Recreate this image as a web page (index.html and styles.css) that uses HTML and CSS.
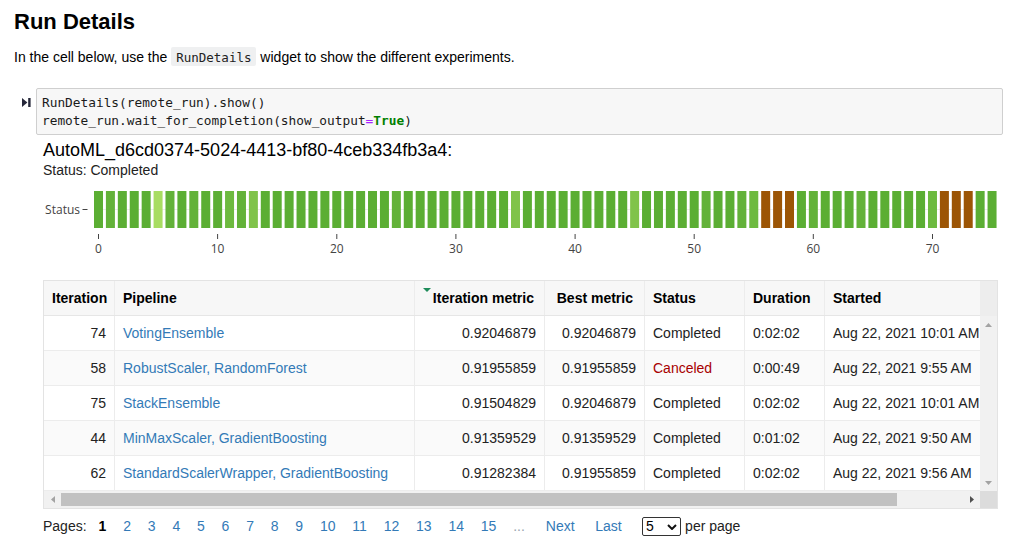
FILE: index.html
```html
<!DOCTYPE html>
<html lang="en">
<head>
<meta charset="utf-8">
<title>Run Details</title>
<link rel="stylesheet" href="styles.css">
</head>
<body>
<div class="md">
  <h2 class="title">Run Details</h2>
  <p class="intro">In the cell below, use the <code class="inline">RunDetails</code> widget to show the different experiments.</p>
</div>

<div class="cell">
  <div class="prompt">
    <svg class="run-icon" width="9" height="9" viewBox="0 0 9 9"><polygon points="0,0 5.4,4.5 0,9" fill="#26283a"/><rect x="6.2" y="0" width="2.4" height="9" fill="#26283a"/></svg>
  </div>
  <div class="input"><span>RunDetails(remote_run).show()</span>
<span>remote_run.wait_for_completion(show_output<span class="op">=</span><span class="kw">True</span>)</span></div>
</div>

<div class="output">
  <div class="run-title">AutoML_d6cd0374-5024-4413-bf80-4ceb334fb3a4:</div>
  <div class="run-status">Status: Completed</div>

  <svg class="chart" width="960" height="80" viewBox="43 180 960 80">
    <line x1="94" y1="209.5" x2="996" y2="209.5" stroke="#eeeeee" stroke-width="1"/>
    <text class="axis" x="80" y="213.6" text-anchor="end">Status</text>
    <line x1="82.5" y1="209.5" x2="87.5" y2="209.5" stroke="#444" stroke-width="1"/>
    <g class="bars">
      <rect class="a" x="94.00" y="191" width="9" height="37"/>
      <rect class="b" x="105.91" y="191" width="9" height="37"/>
      <rect class="a" x="117.83" y="191" width="9" height="37"/>
      <rect class="a" x="129.74" y="191" width="9" height="37"/>
      <rect class="a" x="141.66" y="191" width="9" height="37"/>
      <rect class="e" x="153.57" y="191" width="9" height="37"/>
      <rect class="b" x="165.48" y="191" width="9" height="37"/>
      <rect class="a" x="177.40" y="191" width="9" height="37"/>
      <rect class="b" x="189.31" y="191" width="9" height="37"/>
      <rect class="a" x="201.23" y="191" width="9" height="37"/>
      <rect class="a" x="213.14" y="191" width="9" height="37"/>
      <rect class="c" x="225.05" y="191" width="9" height="37"/>
      <rect class="b" x="236.97" y="191" width="9" height="37"/>
      <rect class="d" x="248.88" y="191" width="9" height="37"/>
      <rect class="a" x="260.80" y="191" width="9" height="37"/>
      <rect class="a" x="272.71" y="191" width="9" height="37"/>
      <rect class="a" x="284.62" y="191" width="9" height="37"/>
      <rect class="a" x="296.54" y="191" width="9" height="37"/>
      <rect class="a" x="308.45" y="191" width="9" height="37"/>
      <rect class="a" x="320.37" y="191" width="9" height="37"/>
      <rect class="a" x="332.28" y="191" width="9" height="37"/>
      <rect class="a" x="344.19" y="191" width="9" height="37"/>
      <rect class="a" x="356.11" y="191" width="9" height="37"/>
      <rect class="a" x="368.02" y="191" width="9" height="37"/>
      <rect class="a" x="379.94" y="191" width="9" height="37"/>
      <rect class="b" x="391.85" y="191" width="9" height="37"/>
      <rect class="a" x="403.76" y="191" width="9" height="37"/>
      <rect class="a" x="415.68" y="191" width="9" height="37"/>
      <rect class="a" x="427.59" y="191" width="9" height="37"/>
      <rect class="a" x="439.51" y="191" width="9" height="37"/>
      <rect class="a" x="451.42" y="191" width="9" height="37"/>
      <rect class="a" x="463.33" y="191" width="9" height="37"/>
      <rect class="a" x="475.25" y="191" width="9" height="37"/>
      <rect class="a" x="487.16" y="191" width="9" height="37"/>
      <rect class="a" x="499.08" y="191" width="9" height="37"/>
      <rect class="d" x="510.99" y="191" width="9" height="37"/>
      <rect class="a" x="522.90" y="191" width="9" height="37"/>
      <rect class="a" x="534.82" y="191" width="9" height="37"/>
      <rect class="a" x="546.73" y="191" width="9" height="37"/>
      <rect class="a" x="558.65" y="191" width="9" height="37"/>
      <rect class="a" x="570.56" y="191" width="9" height="37"/>
      <rect class="a" x="582.47" y="191" width="9" height="37"/>
      <rect class="a" x="594.39" y="191" width="9" height="37"/>
      <rect class="a" x="606.30" y="191" width="9" height="37"/>
      <rect class="a" x="618.22" y="191" width="9" height="37"/>
      <rect class="d" x="630.13" y="191" width="9" height="37"/>
      <rect class="a" x="642.04" y="191" width="9" height="37"/>
      <rect class="a" x="653.96" y="191" width="9" height="37"/>
      <rect class="a" x="665.87" y="191" width="9" height="37"/>
      <rect class="a" x="677.79" y="191" width="9" height="37"/>
      <rect class="a" x="689.70" y="191" width="9" height="37"/>
      <rect class="b" x="701.61" y="191" width="9" height="37"/>
      <rect class="a" x="713.53" y="191" width="9" height="37"/>
      <rect class="a" x="725.44" y="191" width="9" height="37"/>
      <rect class="b" x="737.36" y="191" width="9" height="37"/>
      <rect class="c" x="749.27" y="191" width="9" height="37"/>
      <rect class="r" x="761.18" y="191" width="9" height="37"/>
      <rect class="r" x="773.10" y="191" width="9" height="37"/>
      <rect class="r" x="785.01" y="191" width="9" height="37"/>
      <rect class="a" x="796.93" y="191" width="9" height="37"/>
      <rect class="b" x="808.84" y="191" width="9" height="37"/>
      <rect class="a" x="820.75" y="191" width="9" height="37"/>
      <rect class="a" x="832.67" y="191" width="9" height="37"/>
      <rect class="a" x="844.58" y="191" width="9" height="37"/>
      <rect class="b" x="856.50" y="191" width="9" height="37"/>
      <rect class="a" x="868.41" y="191" width="9" height="37"/>
      <rect class="a" x="880.32" y="191" width="9" height="37"/>
      <rect class="a" x="892.24" y="191" width="9" height="37"/>
      <rect class="a" x="904.15" y="191" width="9" height="37"/>
      <rect class="a" x="916.07" y="191" width="9" height="37"/>
      <rect class="c" x="927.98" y="191" width="9" height="37"/>
      <rect class="r" x="939.89" y="191" width="9" height="37"/>
      <rect class="r" x="951.81" y="191" width="9" height="37"/>
      <rect class="r" x="963.72" y="191" width="9" height="37"/>
      <rect class="a" x="975.64" y="191" width="9" height="37"/>
      <rect class="a" x="987.55" y="191" width="9" height="37"/>
    </g>
    <g class="ticks" stroke="#444" stroke-width="1">
      <line x1="98.5" y1="234" x2="98.5" y2="239"/>
      <line x1="217.6" y1="234" x2="217.6" y2="239"/>
      <line x1="336.8" y1="234" x2="336.8" y2="239"/>
      <line x1="455.9" y1="234" x2="455.9" y2="239"/>
      <line x1="575.1" y1="234" x2="575.1" y2="239"/>
      <line x1="694.2" y1="234" x2="694.2" y2="239"/>
      <line x1="813.3" y1="234" x2="813.3" y2="239"/>
      <line x1="932.5" y1="234" x2="932.5" y2="239"/>
    </g>
    <g class="axis" text-anchor="middle">
      <text x="98.5" y="253.4">0</text>
      <text x="217.6" y="253.4">10</text>
      <text x="336.8" y="253.4">20</text>
      <text x="455.9" y="253.4">30</text>
      <text x="575.1" y="253.4">40</text>
      <text x="694.2" y="253.4">50</text>
      <text x="813.3" y="253.4">60</text>
      <text x="932.5" y="253.4">70</text>
    </g>
  </svg>

  <div class="grid">
    <div class="grid-main">
      <div class="table">
        <div class="tr th">
          <div class="td">Iteration</div>
          <div class="td">Pipeline</div>
          <div class="td num sorted"><span class="sort-ind"></span>Iteration metric</div>
          <div class="td num hbest">Best metric</div>
          <div class="td">Status</div>
          <div class="td">Duration</div>
          <div class="td">Started</div>
        </div>
        <div class="tr">
          <div class="td num">74</div>
          <div class="td"><a class="link">VotingEnsemble</a></div>
          <div class="td num">0.92046879</div>
          <div class="td num">0.92046879</div>
          <div class="td">Completed</div>
          <div class="td">0:02:02</div>
          <div class="td">Aug 22, 2021 10:01 AM</div>
        </div>
        <div class="tr">
          <div class="td num">58</div>
          <div class="td"><a class="link">RobustScaler, RandomForest</a></div>
          <div class="td num">0.91955859</div>
          <div class="td num">0.91955859</div>
          <div class="td canceled">Canceled</div>
          <div class="td">0:00:49</div>
          <div class="td">Aug 22, 2021 9:55 AM</div>
        </div>
        <div class="tr">
          <div class="td num">75</div>
          <div class="td"><a class="link">StackEnsemble</a></div>
          <div class="td num">0.91504829</div>
          <div class="td num">0.92046879</div>
          <div class="td">Completed</div>
          <div class="td">0:02:02</div>
          <div class="td">Aug 22, 2021 10:01 AM</div>
        </div>
        <div class="tr">
          <div class="td num">44</div>
          <div class="td"><a class="link">MinMaxScaler, GradientBoosting</a></div>
          <div class="td num">0.91359529</div>
          <div class="td num">0.91359529</div>
          <div class="td">Completed</div>
          <div class="td">0:01:02</div>
          <div class="td">Aug 22, 2021 9:50 AM</div>
        </div>
        <div class="tr">
          <div class="td num">62</div>
          <div class="td"><a class="link">StandardScalerWrapper, GradientBoosting</a></div>
          <div class="td num">0.91282384</div>
          <div class="td num">0.91955859</div>
          <div class="td">Completed</div>
          <div class="td">0:02:02</div>
          <div class="td">Aug 22, 2021 9:56 AM</div>
        </div>
      </div>
      <div class="vscroll">
        <div class="vs-head"></div>
        <div class="vs-btn"><svg width="7" height="4" viewBox="0 0 7 4"><polygon points="0,4 3.5,0 7,4" fill="#a3a3a3"/></svg></div>
        <div class="vs-track"></div>
        <div class="vs-btn"><svg width="7" height="4" viewBox="0 0 7 4"><polygon points="0,0 7,0 3.5,4" fill="#a3a3a3"/></svg></div>
      </div>
    </div>
    <div class="hscroll-row">
      <div class="hscroll">
        <div class="hs-btn"><svg width="4" height="7" viewBox="0 0 4 7"><polygon points="4,0 4,7 0,3.5" fill="#a3a3a3"/></svg></div>
        <div class="hs-track"><div class="hs-thumb"></div></div>
        <div class="hs-btn"><svg width="4" height="7" viewBox="0 0 4 7"><polygon points="0,0 4,3.5 0,7" fill="#505050"/></svg></div>
      </div>
      <div class="corner"></div>
    </div>
  </div>

  <div class="pager">
    <span class="lbl">Pages:</span>
    <span class="pg cur">1</span>
    <a class="pg">2</a>
    <a class="pg">3</a>
    <a class="pg">4</a>
    <a class="pg">5</a>
    <a class="pg">6</a>
    <a class="pg">7</a>
    <a class="pg">8</a>
    <a class="pg">9</a>
    <a class="pg">10</a>
    <a class="pg">11</a>
    <a class="pg">12</a>
    <a class="pg">13</a>
    <a class="pg">14</a>
    <a class="pg">15</a>
    <span class="ell">...</span>
    <a class="nav">Next</a>
    <a class="nav">Last</a>
    <span class="sel-wrap">
      <select class="sel"><option>5</option></select>
      <svg class="chev" width="10" height="6" viewBox="0 0 10 6"><polyline points="1,1 5,5 9,1" fill="none" stroke="#111" stroke-width="2"/></svg>
    </span>
    <span class="per">per page</span>
  </div>
</div>
</body>
</html>
```

FILE: styles.css
```css
* { box-sizing: border-box; }

body {
  margin: 0;
  background: #ffffff;
  color: #000000;
  font-family: "Liberation Sans", Arial, sans-serif;
  font-size: 14px;
}

.md { padding-left: 14px; }

.title {
  margin: 9px 0 0;
  font-size: 22px;
  line-height: 26px;
  font-weight: bold;
}

.intro {
  margin: 12px 0 0;
  line-height: 20px;
}

.inline {
  font-family: "DejaVu Sans Mono", monospace;
  font-size: 12.5px;
  background: #eff0f1;
  padding: 3px 5px 1px;
  border-radius: 2px;
  color: #222;
}

.cell {
  display: flex;
  margin-top: 20px;
  padding-right: 13px;
}

.prompt {
  flex: none;
  width: 36px;
  display: flex;
  justify-content: flex-end;
  align-items: flex-start;
  padding: 10px 5px 0 0;
}

.run-icon { display: block; }

.input {
  flex: 1;
  border: 1px solid #cfcfcf;
  border-radius: 2px;
  background: #f7f7f7;
  padding: 5px 5px 4px;
  font-family: "DejaVu Sans Mono", monospace;
  font-size: 12.8px;
  line-height: 18px;
  white-space: pre;
  color: #1a1a1a;
}

.op { color: #aa22ff; }
.kw { color: #008000; font-weight: bold; }

.output {
  padding-left: 43px;
  margin-top: 5px;
}

.run-title {
  font-size: 18px;
  line-height: 21px;
  color: #000;
}

.run-status {
  line-height: 19px;
  color: #222;
}

.chart { display: block; }

.chart .axis, .chart text {
  font-family: "Open Sans", "DejaVu Sans", sans-serif;
  font-size: 12px;
  fill: #444;
}

.bars .a { fill: #5bae33; }
.bars .b { fill: #63b239; }
.bars .c { fill: #6dba3f; }
.bars .d { fill: #80c34a; }
.bars .e { fill: #a8dd62; }
.bars .r { fill: #9c5505; }

/* grid */
.grid {
  margin-top: 20px;
  width: 955px;
  border: 1px solid #e3e3e3;
}

.grid-main { display: flex; }

.table { width: 936px; flex: none; }

.tr {
  display: grid;
  grid-template-columns: 71px 300px 130px 100px 100px 80px 155px;
  height: 35px;
  border-bottom: 1px solid #ececec;
}

.tr:nth-child(odd):not(.th) { background: #fafafa; }
.tr:nth-child(even) { background: #ffffff; }

.th {
  background: #f7f7f7;
  font-weight: bold;
  color: #000;
  border-bottom-color: #e6e6e6;
}

.td {
  display: flex;
  align-items: center;
  padding: 0 8px;
  border-right: 1px solid #ececec;
  white-space: nowrap;
  overflow: hidden;
  color: #222;
}

.th .td { color: #000; }

.td:last-child { border-right: none; }

.td.num { justify-content: flex-end; }

.th .td.sorted { padding-right: 10px; position: relative; }
.th .td.hbest { padding-right: 11px; }

.sort-ind {
  position: absolute;
  left: 8px;
  top: 7px;
  width: 0;
  height: 0;
  border-left: 4px solid transparent;
  border-right: 4px solid transparent;
  border-top: 4px solid #1e8c5a;
}

.link {
  color: #337ab7;
  text-decoration: none;
}

.canceled { color: #a80000 !important; }

.vscroll {
  width: 17px;
  flex: none;
  display: flex;
  flex-direction: column;
  background: #f1f1f1;
}

.vs-head {
  height: 35px;
  background: #ededed;
}

.vs-btn {
  height: 17px;
  display: flex;
  align-items: center;
  justify-content: center;
}

.vs-btn svg, .hs-btn svg { display: block; }

.vs-track { flex: 1; }

.hscroll-row { display: flex; height: 17px; }

.hscroll {
  width: 936px;
  display: flex;
  background: #f1f1f1;
}

.hs-btn {
  width: 17px;
  flex: none;
  display: flex;
  align-items: center;
  justify-content: center;
}

.hs-track { flex: 1; padding: 2px 0; }

.hs-thumb {
  width: 836px;
  height: 13px;
  background: #c1c1c1;
}

.corner {
  width: 17px;
  background: #dcdcdc;
}

/* pager */
.pager {
  display: flex;
  align-items: center;
  height: 20px;
  margin-top: 7px;
  color: #222;
}

.lbl { margin-right: 12px; }

.pg {
  margin-right: 16.8px;
  color: #337ab7;
}

.pg.cur { color: #000; font-weight: bold; }

.ell { color: #9aa4b0; margin-right: 21px; }

.nav { color: #337ab7; margin-right: 20.5px; }

.sel-wrap {
  position: relative;
  width: 39px;
  height: 19px;
  margin-right: 4px;
}

.sel {
  appearance: none;
  -webkit-appearance: none;
  width: 39px;
  height: 19px;
  border: 1px solid #333;
  border-radius: 2px;
  background: #fff;
  font-family: "Liberation Sans", Arial, sans-serif;
  font-size: 14px;
  padding: 0 0 0 3px;
  color: #000;
  line-height: 17px;
}

.chev {
  position: absolute;
  right: 4px;
  top: 7px;
  pointer-events: none;
}

.per { color: #222; }
```
